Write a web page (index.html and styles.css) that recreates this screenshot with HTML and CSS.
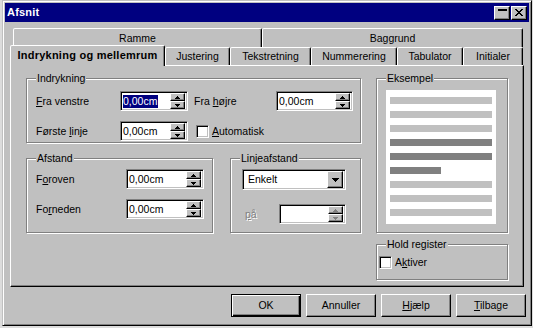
FILE: index.html
```html
<!DOCTYPE html>
<html>
<head>
<meta charset="utf-8">
<link rel="stylesheet" href="styles.css">
</head>
<body>
<div class="window">
  <div class="titlebar">
    <span class="title">Afsnit</span>
    <div class="tbtns">
      <span class="tbtn"><svg width="9" height="9" viewBox="0 0 9 9"><rect x="0" y="1" width="9" height="2"/></svg></span>
      <span class="tbtn"><svg width="8" height="7" viewBox="0 0 8 7"><path d="M0 0h2v1h1v1h2V1h1V0h2v1H7v1H6v1H5v1h1v1h1v1h1v1H6V6H5V5H3v1H2v1H0V6h1V5h1V4h1V3H2V2H1V1H0z"/></svg></span>
    </div>
  </div>
  <div class="client">
    <div class="tabrow back">
      <div class="tab t-ramme">Ramme</div>
      <div class="tab t-bag">Baggrund</div>
    </div>
    <div class="tabrow front">
      <div class="tab sel t1">Indrykning og mellemrum</div>
      <div class="tab t2">Justering</div>
      <div class="tab t3">Tekstretning</div>
      <div class="tab t4">Nummerering</div>
      <div class="tab t5">Tabulator</div>
      <div class="tab t6">Initialer</div>
    </div>
    <div class="panel">
      <div class="col-left">
        <div class="group g-indr">
          <div class="legend">Indrykning</div>
          <div class="grid-indr">
            <span class="lbl"><u>F</u>ra venstre</span>
            <div class="field f68"><span class="val"><span class="hl">0,00cm</span></span><span class="spinner"><span class="sb"><svg class="ar" width="5" height="3" viewBox="0 0 5 3"><path d="M2 0h1v1h1v1h1v1H0V2h1V1h1z"/></svg></span><span class="sb"><svg class="ar" width="5" height="3" viewBox="0 0 5 3"><path d="M0 0h5v1H4v1H3v1H2V2H1V1H0z"/></svg></span></span></div>
            <span class="lbl">Fra <u>h</u>øjre</span>
            <div class="field f77"><span class="val">0,00cm</span><span class="spinner"><span class="sb"><svg class="ar" width="5" height="3" viewBox="0 0 5 3"><path d="M2 0h1v1h1v1h1v1H0V2h1V1h1z"/></svg></span><span class="sb"><svg class="ar" width="5" height="3" viewBox="0 0 5 3"><path d="M0 0h5v1H4v1H3v1H2V2H1V1H0z"/></svg></span></span></div>
            <span class="lbl">Første <u>l</u>inje</span>
            <div class="field f68"><span class="val">0,00cm</span><span class="spinner"><span class="sb"><svg class="ar" width="5" height="3" viewBox="0 0 5 3"><path d="M2 0h1v1h1v1h1v1H0V2h1V1h1z"/></svg></span><span class="sb"><svg class="ar" width="5" height="3" viewBox="0 0 5 3"><path d="M0 0h5v1H4v1H3v1H2V2H1V1H0z"/></svg></span></span></div>
            <div class="check span2"><span class="cb"></span><span><u>A</u>utomatisk</span></div>
          </div>
        </div>
        <div class="row2">
          <div class="group g-afst">
            <div class="legend">Afstand</div>
            <div class="grid-afst">
              <span class="lbl">F<u>o</u>roven</span>
              <div class="field f78"><span class="val">0,00cm</span><span class="spinner"><span class="sb"><svg class="ar" width="5" height="3" viewBox="0 0 5 3"><path d="M2 0h1v1h1v1h1v1H0V2h1V1h1z"/></svg></span><span class="sb"><svg class="ar" width="5" height="3" viewBox="0 0 5 3"><path d="M0 0h5v1H4v1H3v1H2V2H1V1H0z"/></svg></span></span></div>
              <span class="lbl">Fo<u>r</u>neden</span>
              <div class="field f78"><span class="val">0,00cm</span><span class="spinner"><span class="sb"><svg class="ar" width="5" height="3" viewBox="0 0 5 3"><path d="M2 0h1v1h1v1h1v1H0V2h1V1h1z"/></svg></span><span class="sb"><svg class="ar" width="5" height="3" viewBox="0 0 5 3"><path d="M0 0h5v1H4v1H3v1H2V2H1V1H0z"/></svg></span></span></div>
            </div>
          </div>
          <div class="group g-linje">
            <div class="legend">Linjeafstand</div>
            <div class="combo"><span class="val">Enkelt</span><span class="dbtn"><svg width="7" height="4" viewBox="0 0 7 4"><path d="M0 0h7v1H6v1H5v1H4v1H3V3H2V2H1V1H0z"/></svg></span></div>
            <div class="pa-row">
              <span class="lbl dis"><u>p</u>å</span>
              <div class="field f67 disf"><span class="val"></span><span class="spinner"><span class="sb"><svg class="ar dis-ar" width="5" height="3" viewBox="0 0 5 3"><path d="M2 0h1v1h1v1h1v1H0V2h1V1h1z"/></svg></span><span class="sb"><svg class="ar dis-ar" width="5" height="3" viewBox="0 0 5 3"><path d="M0 0h5v1H4v1H3v1H2V2H1V1H0z"/></svg></span></span></div>
            </div>
          </div>
        </div>
      </div>
      <div class="col-right">
        <div class="group g-eks">
          <div class="legend">Eksempel</div>
          <div class="page">
            <div class="bar"></div>
            <div class="bar"></div>
            <div class="bar"></div>
            <div class="bar dark"></div>
            <div class="bar dark"></div>
            <div class="bar dark short"></div>
            <div class="bar"></div>
            <div class="bar"></div>
            <div class="bar"></div>
          </div>
        </div>
        <div class="group g-hold">
          <div class="legend">Hold register</div>
          <div class="check hold"><span class="cb"></span><span>A<u>k</u>tiver</span></div>
        </div>
      </div>
    </div>
    <div class="btnrow">
      <div class="btn def">OK</div>
      <div class="btn">Annuller</div>
      <div class="btn"><span><u>H</u>jælp</span></div>
      <div class="btn"><span><u>T</u>ilbage</span></div>
    </div>
  </div>
</div>
</body>
</html>
```

FILE: styles.css
```css
* { box-sizing: border-box; }
html, body { margin: 0; padding: 0; }
body {
  width: 533px;
  height: 328px;
  overflow: hidden;
  background: #dcdcdc;
  font-family: "Liberation Sans", Arial, sans-serif;
  font-size: 10.5px;
  line-height: 13px;
  color: #000;
}
u { text-decoration: underline; text-underline-offset: 1px; }

.window {
  margin-left: 2px;
  width: 530px;
  height: 326px;
  background: #c0c0c0;
  border: 1px solid;
  border-color: #c0c0c0 #000 #000 #c0c0c0;
  box-shadow: inset 1px 1px #fff, inset -1px -1px #808080;
  padding: 2px;
  display: flex;
  flex-direction: column;
}

.titlebar {
  height: 19px;
  flex: none;
  background: #000080;
  color: #fff;
  display: flex;
  align-items: center;
  justify-content: space-between;
  padding: 0 2px 0 2px;
}
.title { font-weight: bold; font-size: 11px; letter-spacing: 0.2px; }
.tbtns { display: flex; gap: 1px; }
.tbtn {
  width: 16px;
  height: 14px;
  background: #c0c0c0;
  border: 1px solid;
  border-color: #fff #000 #000 #fff;
  box-shadow: inset -1px -1px #808080;
  display: flex;
  align-items: center;
  justify-content: center;
}
.tbtn:first-child { align-items: flex-start; padding-top: 1px; }
.tbtn svg { fill: #000; display: block; }

.client {
  flex: 1;
  display: flex;
  flex-direction: column;
  padding: 6px 5px 0 5px;
}

.tabrow { display: flex; flex: none; }
.tabrow.back { height: 19px; margin-left: 3px; }
.tabrow.front { height: 18px; align-items: flex-end; }
.tab {
  height: 100%;
  background: #c0c0c0;
  border: 1px solid;
  border-bottom: 0;
  border-color: #fff #000 transparent #fff;
  box-shadow: inset -1px 0 #808080;
  border-radius: 2px 2px 0 0;
  display: flex;
  align-items: center;
  justify-content: center;
  white-space: nowrap;
}
.t-ramme { width: 249px; }
.t-bag { width: 261px; }
.t1 { width: 155px; }
.t2 { width: 65px; }
.t3 { width: 81px; }
.t4 { width: 86px; }
.t5 { width: 66px; }
.t6 { width: 60px; }
.tab.sel {
  height: 21px;
  margin-bottom: -1px;
  position: relative;
  z-index: 1;
  font-weight: bold;
  font-size: 11px;
  letter-spacing: 0.25px;
  padding-bottom: 2px;
}

.panel {
  height: 222px;
  flex: none;
  border: 1px solid;
  border-color: #fff #000 #000 #fff;
  box-shadow: inset -1px -1px #808080;
  display: flex;
  gap: 15px;
  padding: 12px 14px 0 15px;
}
.col-left { width: 335px; display: flex; flex-direction: column; gap: 15px; }
.col-right { width: 132px; display: flex; flex-direction: column; gap: 11px; }

.group {
  border: 1px solid #808080;
  box-shadow: 1px 1px #fff, inset 1px 1px #fff;
}
.legend {
  width: max-content;
  height: 13px;
  margin: -7px 0 0 9px;
  padding: 0 1px;
  background: #c0c0c0;
}

.g-indr { height: 65px; }
.grid-indr {
  display: grid;
  grid-template-columns: 84px 74px 82px 77px;
  grid-template-rows: 20px 20px;
  row-gap: 10px;
  margin: 6px 0 0 9px;
  align-items: center;
}
.span2 { grid-column: span 2; }

.row2 { display: flex; gap: 17px; }
.g-afst { width: 187px; height: 75px; }
.g-linje { width: 131px; height: 75px; }
.grid-afst {
  display: grid;
  grid-template-columns: 90px 78px;
  grid-template-rows: 20px 20px;
  row-gap: 10px;
  margin: 4px 0 0 9px;
  align-items: center;
}

.lbl { white-space: nowrap; }
.dis { color: #808080; text-shadow: 1px 1px #fff; }

.field {
  height: 20px;
  background: #fff;
  border: 1px solid;
  border-color: #808080 #fff #fff #808080;
  box-shadow: inset 1px 1px #000, inset -1px -1px #c0c0c0;
  padding: 2px;
  display: flex;
  align-items: center;
}
.f68 { width: 68px; }
.f77 { width: 77px; }
.f78 { width: 78px; }
.f67 { width: 67px; }
.val { flex: 1; height: 13px; line-height: 13px; white-space: nowrap; }
.hl { background: #000080; color: #fff; display: inline-block; padding-right: 1px; }
.spinner { width: 15px; height: 16px; display: flex; flex-direction: column; flex: none; }
.sb {
  flex: 1;
  background: #c0c0c0;
  border: 1px solid;
  border-color: #fff #000 #000 #fff;
  box-shadow: inset -1px -1px #808080;
  display: flex;
  align-items: center;
  justify-content: center;
}
.ar { display: block; fill: #000; }
.dis-ar { fill: #808080; }

.check { display: flex; align-items: center; gap: 3px; }
.grid-indr .check { margin-left: 2px; }
.cb {
  width: 13px;
  height: 13px;
  background: #fff;
  border: 1px solid;
  border-color: #808080 #fff #fff #808080;
  box-shadow: inset 1px 1px #000, inset -1px -1px #c0c0c0;
  flex: none;
}

.combo {
  width: 104px;
  height: 21px;
  margin: 4px 0 0 11px;
  background: #fff;
  border: 1px solid;
  border-color: #808080 #fff #fff #808080;
  box-shadow: inset 1px 1px #000, inset -1px -1px #c0c0c0;
  padding: 2px;
  display: flex;
  align-items: center;
}
.combo .val { padding-left: 3px; }
.dbtn {
  width: 16px;
  height: 17px;
  background: #c0c0c0;
  border: 1px solid;
  border-color: #fff #000 #000 #fff;
  box-shadow: inset -1px -1px #808080;
  display: flex;
  align-items: center;
  justify-content: center;
}
.dbtn svg { display: block; fill: #000; }
.pa-row {
  display: flex;
  align-items: center;
  justify-content: space-between;
  width: 104px;
  margin: 14px 0 0 14px;
  width: 101px;
}
.disf { background: #fff; }

.g-eks { height: 155px; }
.page {
  width: 110px;
  height: 134px;
  margin: 5px 0 0 9px;
  background: #fff;
  padding: 7px 4px;
  display: flex;
  flex-direction: column;
  gap: 7px;
}
.bar { height: 7px; background: #c0c0c0; }
.bar.dark { background: #808080; }
.bar.short { width: 51px; }

.g-hold { height: 36px; }
.check.hold { margin: 5px 0 0 2px; }

.btnrow {
  display: flex;
  justify-content: flex-end;
  gap: 5px;
  margin-top: 7px;
  margin-right: -2px;
}
.btn {
  width: 70px;
  height: 23px;
  border: 1px solid;
  border-color: #fff #000 #000 #fff;
  box-shadow: inset -1px -1px #808080;
  display: flex;
  align-items: center;
  justify-content: center;
}
.btn.def {
  border-color: #000;
  box-shadow: inset 1px 1px #fff, inset -1px -1px #000, inset -2px -2px #808080;
}
```
